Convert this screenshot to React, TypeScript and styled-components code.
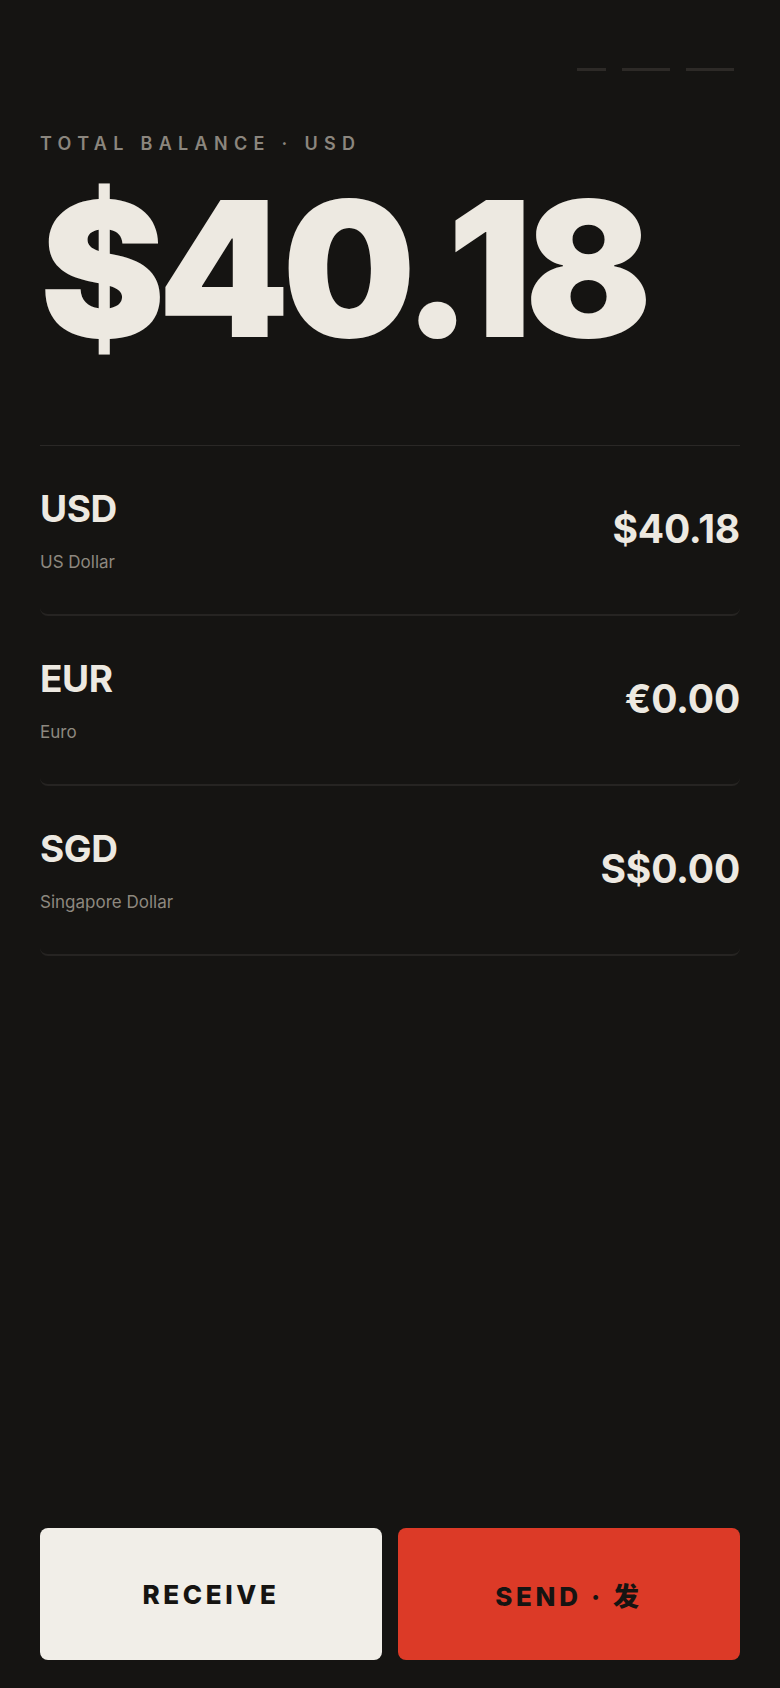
import styled, { createGlobalStyle } from "styled-components";

const GlobalStyle = createGlobalStyle`
  * {
    box-sizing: border-box;
  }
  html,
  body {
    margin: 0;
    padding: 0;
    background: #151412;
  }
  body {
    font-family: Inter, "Noto Sans", "Noto Sans CJK SC", sans-serif;
    color: #ede9e1;
  }
`;

interface Currency {
  code: string;
  name: string;
  amount: string;
}

const currencies: Currency[] = [
  { code: "USD", name: "US Dollar", amount: "$40.18" },
  { code: "EUR", name: "Euro", amount: "€0.00" },
  { code: "SGD", name: "Singapore Dollar", amount: "S$0.00" },
];

const App = () => {
  return (
    <>
      <GlobalStyle />
      <Screen>
        <Pager>
          <Dash width={29} />
          <Dash width={48} />
          <Dash width={48} />
        </Pager>
        <Label>Total Balance · USD</Label>
        <Balance>$40.18</Balance>

        <List>
          {currencies.map((c) => (
            <Row key={c.code}>
              <Info>
                <Code>{c.code}</Code>
                <Name>{c.name}</Name>
              </Info>
              <Amount>{c.amount}</Amount>
            </Row>
          ))}
        </List>

        <Actions>
          <ActionButton variant="light">Receive</ActionButton>
          <ActionButton variant="red">Send · 发</ActionButton>
        </Actions>
      </Screen>
    </>
  );
};

export default App;

const Screen = styled.div`
  min-height: 1688px;
  display: flex;
  flex-direction: column;
  padding: 68px 40px 28px;
`;

const Pager = styled.div`
  display: flex;
  justify-content: flex-end;
  gap: 16px;
  padding-right: 6px;
`;

const Dash = styled.span<{ width: number }>`
  display: block;
  width: ${(props) => props.width}px;
  height: 3px;
  background-color: #2d2a27;
`;

const Label = styled.p`
  margin: 62px 0 0;
  font-size: 18px;
  line-height: 21px;
  font-weight: 600;
  letter-spacing: 0.35em;
  text-transform: uppercase;
  color: #8b867e;
  white-space: nowrap;
`;

const Balance = styled.h1`
  margin: 21px 0 0;
  font-size: 188px;
  line-height: 188px;
  font-weight: 900;
  letter-spacing: -0.04em;
  color: #ede9e1;
  white-space: nowrap;
`;

const List = styled.div`
  margin-top: 82px;
  border-top: 1px solid #2a2826;
  display: flex;
  flex-direction: column;
`;

const Row = styled.div`
  display: flex;
  align-items: center;
  justify-content: space-between;
  padding: 43px 0 40px;
  border-bottom: 2px solid #262422;
  border-radius: 0 0 8px 8px;
`;

const Info = styled.div`
  display: flex;
  flex-direction: column;
`;

const Code = styled.span`
  font-size: 37px;
  line-height: 40px;
  font-weight: 700;
  letter-spacing: -0.01em;
  color: #ede9e1;
`;

const Name = styled.span`
  margin-top: 21px;
  font-size: 17px;
  line-height: 24px;
  font-weight: 400;
  color: #8d887f;
`;

const Amount = styled.span`
  margin-bottom: 6px;
  font-size: 39px;
  line-height: 44px;
  font-weight: 700;
  letter-spacing: -0.005em;
  color: #ede9e1;
`;

const Actions = styled.div`
  margin-top: auto;
  display: grid;
  grid-template-columns: 1fr 1fr;
  gap: 16px;
`;

const ActionButton = styled.button<{ variant: "light" | "red" }>`
  height: 132px;
  border: none;
  border-radius: 8px;
  background-color: ${(props) =>
    props.variant === "red" ? "#dc3a27" : "#f1eee8"};
  color: #161412;
  font-family: Inter, "Noto Sans CJK SC", sans-serif;
  font-size: 26px;
  font-weight: 800;
  letter-spacing: 0.14em;
  text-transform: uppercase;
  cursor: pointer;
`;
